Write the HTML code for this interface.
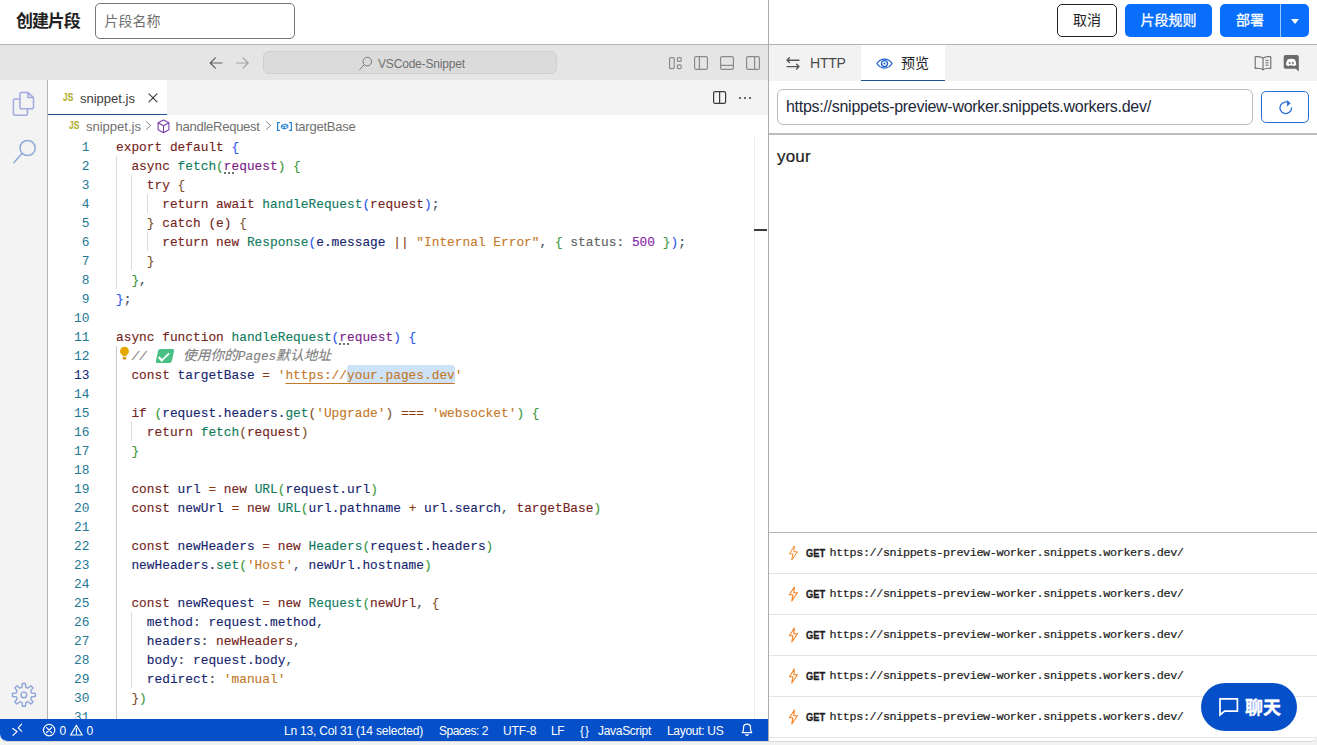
<!DOCTYPE html>
<html lang="zh-CN">
<head>
<meta charset="utf-8">
<title>创建片段</title>
<style>
*{box-sizing:border-box;margin:0;padding:0}
html,body{width:1317px;height:745px;overflow:hidden;background:#f2f2f2}
body{font-family:"Liberation Sans","Noto Sans CJK SC",sans-serif;color:#1d1d1d;position:relative}
.abs{position:absolute}
#app{position:absolute;left:0;top:0;width:1317px;height:742px;background:#fff;border-radius:0 0 7px 7px;overflow:hidden;border-bottom:1px solid #d9d9d9}
/* top bar */
#top{position:absolute;left:0;top:0;width:1317px;height:44px;background:#fff}
#topline{position:absolute;left:0;top:44px;width:1317px;height:1px;background:#b3b3b3}
#title{position:absolute;left:16px;top:10px;font-size:17px;font-weight:bold;line-height:24px;color:#222;letter-spacing:-1.1px}
#nameinput{position:absolute;left:95px;top:3px;width:200px;height:36px;border:1px solid #767676;border-radius:5px;background:#fff;font-size:14px;line-height:34px;padding-left:8.5px;color:#6f6f6f}
.btn{position:absolute;top:4px;height:33px;border-radius:5px;font-size:14px;line-height:31px;text-align:center}
#cancel{left:1057px;width:60px;border:1px solid #222;color:#222;background:#fff}
#rules{left:1125px;width:87px;background:#0a6efd;color:#fff;line-height:33px;-webkit-text-stroke:0.3px #fff}
#deploy{left:1220px;width:60px;background:#0a6efd;color:#fff;border-radius:5px 0 0 5px;line-height:33px;-webkit-text-stroke:0.3px #fff}
#deploydd{left:1281px;width:28px;background:#0a6efd;border-radius:0 5px 5px 0}
#deploysep{position:absolute;left:1280px;top:4px;width:1px;height:33px;background:#9cc4fe}
#deploydd:after{content:"";position:absolute;left:9.5px;top:14.5px;border:4.7px solid transparent;border-top:5.5px solid #fff;border-bottom:0}
/* left pane */
#titlebar{position:absolute;left:0;top:45px;width:768px;height:35px;background:#e5e5e5}
#cmd{position:absolute;left:263px;top:6px;width:294px;height:23px;border:1px solid #cfcfcf;border-radius:6px;background:#dbdbdb}
#cmdtxt{position:absolute;left:378px;top:11px;font-size:12px;line-height:16px;color:#707070;letter-spacing:-0.18px}
#actbar{position:absolute;left:0;top:80px;width:48px;height:639px;background:#f3f3f3;border-right:1px solid #b4b4b4}
#tabs{position:absolute;left:48px;top:80px;width:720px;height:35px;background:#f3f3f3}
#tab{position:absolute;left:0;top:0;width:119px;height:35px;background:#fff;border-bottom:1px solid #1f5394}
#crumbs{position:absolute;left:48px;top:115px;width:720px;height:22px;background:#fff;font-size:13px;line-height:24px;color:#707070}
#editor{position:absolute;left:48px;top:137px;width:720px;height:582px;background:#fff;overflow:hidden}
#vdiv{position:absolute;left:768px;top:0;width:1px;height:741px;background:#ababab}
#status{position:absolute;left:0;top:719px;width:768px;height:22px;background:#0550c8;color:#fff;font-size:12px;line-height:25px;border-radius:0 0 0 7px}
/* right pane */
#rtabs{position:absolute;left:769px;top:45px;width:548px;height:36px;background:#f2f2f2}
#ptab{position:absolute;left:92px;top:0;width:84px;height:36px;background:#fff;border-bottom:1px solid #1f5394}
#url{position:absolute;left:777px;top:89px;width:476px;height:36px;border:1px solid #bcbcbc;border-radius:6px;font-size:16px;line-height:34px;padding-left:8px;color:#1d2939;white-space:nowrap;overflow:hidden;letter-spacing:-0.28px}
#refresh{position:absolute;left:1261px;top:91px;width:48px;height:32px;border:1px solid #2b6fd6;border-radius:5px;background:#fff}
#hline{position:absolute;left:769px;top:133px;width:548px;height:2px;background:#bcbcbc}
#your{position:absolute;left:777px;top:146.5px;font-size:17px;line-height:20px;color:#1d1d1d;-webkit-text-stroke:0.2px #1d1d1d;letter-spacing:0.2px}
#log{position:absolute;left:769px;top:532px;width:548px;height:209px;border-top:1px solid #b3b3b3;background:#fff}
.row{position:relative;height:41px;border-bottom:1px solid #e5e5e5;font-family:"Liberation Mono",monospace;font-size:11.8px;letter-spacing:-0.4px;line-height:40px;color:#1d1d1d;white-space:pre}
.row b{position:absolute;left:36.5px;top:0;font-family:"Liberation Sans",sans-serif;font-size:10.8px;font-weight:bold;letter-spacing:0;transform:scaleX(.86);transform-origin:0 50%;-webkit-text-stroke:0.3px currentColor}
.row span{position:absolute;left:60.5px;top:0;-webkit-text-stroke:0.2px currentColor}
.row svg{position:absolute;left:19px;top:12px}
#chat{position:absolute;left:1201px;top:683px;width:96px;height:48px;border-radius:24px;background:#0550c8;color:#fff;font-size:18px;font-weight:bold;line-height:48px}
#chat span{position:absolute;left:44px;top:0.5px;-webkit-text-stroke:0.4px #fff}
/* code */
.ln{position:absolute;left:0;width:41.5px;text-align:right;color:#237893;font-family:"Liberation Mono",monospace;font-size:12.83px;line-height:19px;height:19px}
.cl{position:absolute;left:68px;height:19px;white-space:pre;font-family:"Liberation Mono","Noto Sans CJK SC",monospace;font-size:12.83px;line-height:19px;color:#3b4a5a}
.k{color:#74231a}.f{color:#0e7a5c}.p{color:#7a1a8a}.v{color:#14246e}.m{color:#74231a}.s{color:#c4782a}.n{color:#8a1fa8}.g{color:#606060}
.o{color:#8a3c14}.c{color:#808080;font-style:italic}.b1{color:#2a55f0}.b2{color:#3c983c}.b3{color:#80502c}
.ig{position:absolute;width:1px;background:#dcdcdc}
.st{position:absolute;top:0;white-space:nowrap}

.ln.cur{color:#0b216f}
.ig.act{background:#c8c8c8}
.emo{display:inline-block;position:relative;margin:0 2.3px 0 2.5px;width:16px;height:13.5px;color:transparent;background:#48c085;border-radius:2px;transform:skewX(-12deg);vertical-align:-2px;overflow:hidden;font-style:normal;line-height:13px}
.emo:after{content:"";position:absolute;left:4px;top:1.5px;width:4px;height:7.5px;border:solid #fff;border-width:0 2px 2px 0;transform:rotate(40deg)}
.u{text-decoration:underline;text-underline-offset:4px;text-decoration-thickness:1px}
.sel{background:#cfe3f8;border-radius:3px;padding:3.2px 0 0.3px 0}
#ruler{position:absolute;left:706px;top:0;width:13px;height:582px;border-left:1px solid #ececec;background:#fff}
#rulermark{position:absolute;left:706px;top:92px;width:13px;height:2px;background:#3b3b3b}

.js{font-size:10.2px;font-weight:bold;color:#b5b336;line-height:12px;transform:scaleX(.82);transform-origin:0 50%;display:inline-block;-webkit-text-stroke:0.2px #b5b336}

.cl,.ln{margin-top:1px}
.cl{-webkit-text-stroke:0.12px currentColor}
.cj{font-size:13.7px}
.hint{position:relative;display:inline-block;height:19px;vertical-align:top}
.hint:after{content:"";position:absolute;left:0;top:15px;width:2px;height:2px;background:#707070;box-shadow:4px 0 #707070,8px 0 #707070}
</style>
</head>
<body>
<div id="app">
<!-- TOP BAR -->
<div id="top">
  <div id="title">创建片段</div>
  <div id="nameinput">片段名称</div>
  <div class="btn" id="cancel">取消</div>
  <div class="btn" id="rules">片段规则</div>
  <div class="btn" id="deploy">部署</div>
  <div id="deploysep"></div>
  <div class="btn" id="deploydd"></div>
</div>
<div id="topline"></div>

<!-- LEFT: VS CODE -->
<div id="titlebar">
  <div id="cmd"></div>
<svg class="abs" style="left:0;top:0" width="768" height="35" viewBox="0 45 768 35" fill="none" stroke-linecap="round" stroke-linejoin="round">
<g stroke="#5f5f5f" stroke-width="1.2"><path d="M222 63H210.4M215.4 57.8L210.2 63l5.2 5.2"/></g>
<g stroke="#a3a3a3" stroke-width="1.2"><path d="M236.4 63H248M243 57.8l5.2 5.2-5.2 5.2"/></g>
<g stroke="#7a7a7a" stroke-width="1"><circle cx="367.3" cy="61.6" r="4.3"/><path d="M364.2 64.8L359.8 69.4"/></g>
<g stroke="#8a8a8a" stroke-width="1.2">
<rect x="669.6" y="57.6" width="4.6" height="11" rx="1"/><rect x="677.4" y="57.6" width="3.8" height="3.8" rx="1"/><rect x="677.4" y="64.8" width="3.8" height="3.8" rx="1"/>
<rect x="694.6" y="56.6" width="12.8" height="12.8" rx="1.5"/><path d="M699.4 56.6v12.8"/>
<rect x="720.6" y="56.6" width="12.8" height="12.8" rx="1.5"/><path d="M720.6 65.4h12.8"/>
<rect x="746.6" y="56.6" width="12.8" height="12.8" rx="1.5"/><path d="M754.6 56.6v12.8"/>
</g></svg>
  <div id="cmdtxt">VSCode-Snippet</div>
</div>
<div id="actbar"><svg class="abs" style="left:0;top:0" width="47" height="639" viewBox="0 80 47 639" fill="none" stroke-linecap="round" stroke-linejoin="round">
<g stroke="#a0a9e0" stroke-width="1.5">
<path d="M27.9 92.4H21.4a1.5 1.5 0 0 0-1.5 1.5v13.4a1.5 1.5 0 0 0 1.5 1.5h10.6a1.5 1.5 0 0 0 1.5-1.5V97.6zM27.9 92.4v5.2h5.6"/>
<path d="M19.9 98.9h-5a1.5 1.5 0 0 0-1.5 1.5v13.3a1.5 1.5 0 0 0 1.5 1.5h11.1a1.5 1.5 0 0 0 1.5-1.5v-4.9"/>
</g>
<g stroke="#8eaad8" stroke-width="1.5"><circle cx="27.6" cy="148" r="7.6"/><path d="M22 153.6L13.8 162.8"/></g>
<g stroke="#8ea6d8" stroke-width="1.4"><path d="M22.00 687.23 L22.37 683.50 L25.43 683.50 L25.80 687.23 L27.97 688.13 L30.88 685.76 L33.04 687.92 L30.67 690.83 L31.57 693.00 L35.30 693.37 L35.30 696.43 L31.57 696.80 L30.67 698.97 L33.04 701.88 L30.88 704.04 L27.97 701.67 L25.80 702.57 L25.43 706.30 L22.37 706.30 L22.00 702.57 L19.83 701.67 L16.92 704.04 L14.76 701.88 L17.13 698.97 L16.23 696.80 L12.50 696.43 L12.50 693.37 L16.23 693.00 L17.13 690.83 L14.76 687.92 L16.92 685.76 L19.83 688.13Z"/><circle cx="23.9" cy="694.9" r="2.8"/></g>
</svg></div>
<div id="tabs"><div id="tab">
<span class="st js" style="left:15px;top:11.7px">JS</span>
<span class="st" style="left:32px;top:10px;font-size:13px;line-height:18px;color:#3b3b3b">snippet.js</span>
<svg class="abs" style="left:99px;top:11.9px" width="12" height="12" viewBox="0 0 12 12" stroke="#3b3b3b" stroke-width="1.1" stroke-linecap="round"><path d="M2 1.9l8 8M10 1.9l-8 8"/></svg>
</div>
<svg class="abs" style="left:660px;top:8px" width="50" height="20" viewBox="708 88 50 20" fill="none" stroke="#3b3b3b" stroke-width="1.2" stroke-linejoin="round"><rect x="713.6" y="91.6" width="12" height="11.8" rx="1.5"/><path d="M719.6 91.6v11.8"/><g fill="#3b3b3b" stroke="none"><circle cx="740" cy="98" r="1"/><circle cx="745" cy="98" r="1"/><circle cx="750" cy="98" r="1"/></g></svg>
</div>
<div id="crumbs">
<span class="st js" style="left:21.2px;top:5.2px">JS</span>
<span class="st" style="left:38px">snippet.js</span>
<svg class="abs" style="left:97px;top:4.8px" width="8" height="11" viewBox="0 0 8 11" fill="none" stroke="#8c8c8c" stroke-width="1" stroke-linecap="round" stroke-linejoin="round"><path d="M1.3 1.6L5.8 5.5 1.3 9.4"/></svg>
<svg class="abs" style="left:109.4px;top:4.1px" width="13" height="15" viewBox="0 0 13 15" fill="none" stroke="#7a3fa8" stroke-width="1.1" stroke-linejoin="round"><path d="M6.5 1l5.4 2.8v7l-5.4 3-5.4-3v-7zM1.1 3.800l5.400 3 5.400-3M6.500 6.800v7"/></svg>
<span class="st" style="left:127.5px;letter-spacing:-0.25px">handleRequest</span>
<svg class="abs" style="left:217px;top:4.8px" width="8" height="11" viewBox="0 0 8 11" fill="none" stroke="#8c8c8c" stroke-width="1" stroke-linecap="round" stroke-linejoin="round"><path d="M1.3 1.6L5.8 5.5 1.3 9.4"/></svg>
<svg class="abs" style="left:228.5px;top:7px" width="15" height="9" viewBox="0 0 15 9" fill="none" stroke="#1a7acc" stroke-width="1.1" stroke-linejoin="round"><path d="M2.8 .6H.6v7.8h2.200M12.200 .600h2.200v7.800h-2.200"/><path d="M4.400 3.600l3.600-1.600 2.800 1.200v2.400L7.200 7 4.400 5.800zM4.400 3.600l2.800 1.200 3.600-1.600M7.200 4.800V7" stroke-width="1"/></svg>
<span class="st" style="left:247px;letter-spacing:-0.24px">targetBase</span>
</div>
<div id="editor">
<div class="ig" style="left:68.0px;top:19px;height:133px"></div>
<div class="ig" style="left:83.4px;top:38px;height:95px"></div>
<div class="ig" style="left:98.8px;top:57px;height:19px"></div>
<div class="ig" style="left:98.8px;top:95px;height:19px"></div>
<div class="ig act" style="left:68.0px;top:209px;height:380px"></div>
<div class="ig" style="left:83.4px;top:285px;height:19px"></div>
<div class="ig" style="left:83.4px;top:475px;height:76px"></div>
<div class="ln" style="top:0px">1</div>
<div class="cl" style="top:0px"><span class="k">export</span> <span class="k">default</span> <span class="b1">{</span></div>
<div class="ln" style="top:19px">2</div>
<div class="cl" style="top:19px">  <span class="k">async</span> <span class="f">fetch</span><span class="b2">(</span><span class="p hint">request</span><span class="b2">)</span> <span class="b2">{</span></div>
<div class="ln" style="top:38px">3</div>
<div class="cl" style="top:38px">    <span class="k">try</span> <span class="b3">{</span></div>
<div class="ln" style="top:57px">4</div>
<div class="cl" style="top:57px">      <span class="k">return</span> <span class="k">await</span> <span class="f">handleRequest</span><span class="b1">(</span><span class="m">request</span><span class="b1">)</span>;</div>
<div class="ln" style="top:76px">5</div>
<div class="cl" style="top:76px">    <span class="b3">}</span> <span class="k">catch</span> <span class="m">(e)</span> <span class="b3">{</span></div>
<div class="ln" style="top:95px">6</div>
<div class="cl" style="top:95px">      <span class="k">return</span> <span class="k">new</span> <span class="f">Response</span><span class="b1">(</span><span class="v">e.message</span> <span class="o">||</span> <span class="s">"Internal Error"</span>, <span class="b2">{</span> <span class="g">status:</span> <span class="n">500</span> <span class="b2">}</span><span class="b1">)</span>;</div>
<div class="ln" style="top:114px">7</div>
<div class="cl" style="top:114px">    <span class="b3">}</span></div>
<div class="ln" style="top:133px">8</div>
<div class="cl" style="top:133px">  <span class="b2">}</span>,</div>
<div class="ln" style="top:152px">9</div>
<div class="cl" style="top:152px"><span class="b1">}</span>;</div>
<div class="ln" style="top:171px">10</div>
<div class="ln" style="top:190px">11</div>
<div class="cl" style="top:190px"><span class="k">async</span> <span class="k">function</span> <span class="f">handleRequest</span><span class="b1">(</span><span class="p hint">request</span><span class="b1">)</span> <span class="b1">{</span></div>
<div class="ln" style="top:209px">12</div>
<div class="cl" style="top:209px">  <span class="c">// <span class="emo">✅</span> <span class="cj">使用你的</span>Pages<span class="cj">默认地址</span></span></div>
<div class="ln cur" style="top:228px">13</div>
<div class="cl" style="top:228px">  <span class="k">const</span> <span class="v">targetBase</span> <span class="o">=</span> <span class="s">'</span><span class="s u">https://<span class="sel">your.pages.dev</span></span><span class="s">'</span></div>
<div class="ln" style="top:247px">14</div>
<div class="ln" style="top:266px">15</div>
<div class="cl" style="top:266px">  <span class="k">if</span> <span class="b2">(</span><span class="v">request.headers.</span><span class="f">get</span><span class="b3">(</span><span class="s">'Upgrade'</span><span class="b3">)</span> <span class="o">===</span> <span class="s">'websocket'</span><span class="b2">)</span> <span class="b2">{</span></div>
<div class="ln" style="top:285px">16</div>
<div class="cl" style="top:285px">    <span class="k">return</span> <span class="f">fetch</span><span class="b3">(</span><span class="m">request</span><span class="b3">)</span></div>
<div class="ln" style="top:304px">17</div>
<div class="cl" style="top:304px">  <span class="b2">}</span></div>
<div class="ln" style="top:323px">18</div>
<div class="ln" style="top:342px">19</div>
<div class="cl" style="top:342px">  <span class="k">const</span> <span class="v">url</span> <span class="o">=</span> <span class="k">new</span> <span class="f">URL</span><span class="b2">(</span><span class="v">request.url</span><span class="b2">)</span></div>
<div class="ln" style="top:361px">20</div>
<div class="cl" style="top:361px">  <span class="k">const</span> <span class="v">newUrl</span> <span class="o">=</span> <span class="k">new</span> <span class="f">URL</span><span class="b2">(</span><span class="v">url.pathname</span> <span class="o">+</span> <span class="v">url.search</span>, <span class="m">targetBase</span><span class="b2">)</span></div>
<div class="ln" style="top:380px">21</div>
<div class="ln" style="top:399px">22</div>
<div class="cl" style="top:399px">  <span class="k">const</span> <span class="v">newHeaders</span> <span class="o">=</span> <span class="k">new</span> <span class="f">Headers</span><span class="b2">(</span><span class="v">request.headers</span><span class="b2">)</span></div>
<div class="ln" style="top:418px">23</div>
<div class="cl" style="top:418px">  <span class="v">newHeaders.</span><span class="f">set</span><span class="b2">(</span><span class="s">'Host'</span>, <span class="v">newUrl.hostname</span><span class="b2">)</span></div>
<div class="ln" style="top:437px">24</div>
<div class="ln" style="top:456px">25</div>
<div class="cl" style="top:456px">  <span class="k">const</span> <span class="v">newRequest</span> <span class="o">=</span> <span class="k">new</span> <span class="f">Request</span><span class="b2">(</span><span class="m">newUrl</span>, <span class="b3">{</span></div>
<div class="ln" style="top:475px">26</div>
<div class="cl" style="top:475px">    <span class="v">method</span>: <span class="v">request.method</span>,</div>
<div class="ln" style="top:494px">27</div>
<div class="cl" style="top:494px">    <span class="v">headers</span>: <span class="m">newHeaders</span>,</div>
<div class="ln" style="top:513px">28</div>
<div class="cl" style="top:513px">    <span class="v">body</span>: <span class="v">request.body</span>,</div>
<div class="ln" style="top:532px">29</div>
<div class="cl" style="top:532px">    <span class="v">redirect</span>: <span class="s">'manual'</span></div>
<div class="ln" style="top:551px">30</div>
<div class="cl" style="top:551px">  <span class="b3">}</span><span class="b2">)</span></div>
<div class="ln" style="top:570px">31</div>
<svg class="abs" style="left:71px;top:209px" width="11" height="15" viewBox="0 0 11 15"><path d="M5.500 .800a4.400 4.400 0 0 0-2.800 7.800c.500.500.800 1 .800 1.700h4c0-.700.300-1.200.800-1.700A4.400 4.400 0 0 0 5.500.800z" fill="#e5a800"/><path d="M3.700 11.300h3.600v1.300a.900.900 0 0 1-.900.900H4.600a.900.900 0 0 1-.900-.900z" fill="#c98f00"/></svg>
<div id="ruler"></div><div id="rulermark"></div>
</div>
<div id="status">
<svg class="abs" style="left:0;top:0" width="100" height="22" viewBox="0 719 100 22" fill="none" stroke="#fff" stroke-width="1.2" stroke-linecap="round" stroke-linejoin="round">
<path d="M12.8 728.4l4.2 3.2-4 3.8M21.6 724.2l-3.4 3.6 3.4 3.4"/>
<circle cx="49.1" cy="730.1" r="5.7"/><path d="M46.6 727.6l5 5M51.6 727.6l-5 5" stroke-width="1.3"/>
<path d="M76.4 725.2l5.8 9.8H70.6zM76.4 728.6v3.2M76.4 733.2v.2"/>
</svg>
<span class="st" style="left:59.5px">0</span><span class="st" style="left:86.5px">0</span>
<span class="st" style="left:284px;letter-spacing:-0.19px">Ln 13, Col 31 (14 selected)</span>
<span class="st" style="left:439px;letter-spacing:-0.5px">Spaces: 2</span>
<span class="st" style="left:503px;letter-spacing:-0.15px">UTF-8</span>
<span class="st" style="left:551px;letter-spacing:-0.5px">LF</span>
<span class="st" style="left:580px;letter-spacing:1px">{}</span>
<span class="st" style="left:598px;letter-spacing:-0.3px">JavaScript</span>
<span class="st" style="left:667px;letter-spacing:-0.3px">Layout: US</span>
<svg class="abs" style="left:738.5px;top:2.2px" width="16" height="16" viewBox="0 0 16 16" fill="none" stroke="#fff" stroke-width="1.2" stroke-linecap="round" stroke-linejoin="round"><path d="M3.2 11.6h9.6c-.9-1-1.3-2-1.3-3.6V6.6a3.5 3.5 0 0 0-7 0V8c0 1.600-.4 2.600-1.300 3.600zM6.800 13.600a1.300 1.300 0 0 0 2.400 0"/></svg>
</div>
<div id="vdiv"></div>

<!-- RIGHT: PREVIEW -->
<div id="rtabs">
<svg class="abs" style="left:16px;top:11px" width="16" height="14" viewBox="785 56 16 14" fill="none" stroke="#555" stroke-width="1.35" stroke-linecap="round" stroke-linejoin="round"><path d="M799 60.2H787M789.4 57.8l-2.4 2.4 2.4 2.4M787 66.6h12M796.6 64.2l2.4 2.4-2.4 2.4"/></svg>
<span class="st" style="left:41px;top:9px;font-size:14px;line-height:18px;color:#4a4a4a;letter-spacing:-0.2px">HTTP</span>
<div id="ptab">
<svg class="abs" style="left:15.4px;top:13px" width="17" height="11" viewBox="0 0 17 11" fill="none" stroke="#1f5fd0" stroke-width="1.25"><path d="M.9 5.5c1.7-2.8 4.4-4.5 7.6-4.5s5.9 1.7 7.6 4.5c-1.7 2.8-4.4 4.5-7.6 4.5S2.6 8.3.900 5.5z"/><circle cx="8.5" cy="5.5" r="3"/><circle cx="8.5" cy="5.5" r="1" fill="#1f5fd0" stroke="none"/></svg>
<span class="st" style="left:40px;top:8px;font-size:14px;line-height:20px;color:#222">预览</span>
</div>
<svg class="abs" style="left:484px;top:9px" width="50" height="20" viewBox="1253 54 50 20" fill="none" stroke="#6b6b6b" stroke-width="1.1" stroke-linejoin="round">
<path d="M1263 58.200c-1.800-1.400-4.600-1.800-7.800-1.400v11.600c3.200-.4 6-.200 7.800 1.400 1.800-1.600 4.600-1.800 7.800-1.400V56.800c-3.200-.4-6 0-7.800 1.400zM1263 58.200v11.600"/>
<path d="M1265.400 60.400h3.200M1265.400 62.800h3.200M1265.400 65.200h3.200" stroke-width="1"/>
<g stroke="none"><path fill="#6b6b6b" d="M1285.500 55h11.500a1.800 1.800 0 0 1 1.800 1.800V71.600l-3-2.800H1285.500a1.800 1.800 0 0 1-1.800-1.800V56.800a1.800 1.800 0 0 1 1.800-1.800z"/>
<path fill="#fff" d="M1287.600 59.600c1.200-.6 2.200-.8 3.600-.8s2.400.2 3.600.8c1 1.600 1.500 3.400 1.400 5.400-.8.600-1.600 1-2.600 1.200l-.6-1c-.6.200-1.200.3-1.800.3s-1.200-.1-1.800-.3l-.6 1c-1-.2-1.800-.6-2.600-1.200-.1-2 .4-3.800 1.400-5.400z"/>
<circle cx="1289.600" cy="63" r="1" fill="#6b6b6b"/><circle cx="1292.800" cy="63" r="1" fill="#6b6b6b"/></g>
</svg>
</div>
<div id="url">https://snippets-preview-worker.snippets.workers.dev/</div>
<div id="refresh"><svg class="abs" style="left:15px;top:7px" width="18" height="18" viewBox="0 0 18 18" fill="none" stroke="#2b6fd6" stroke-width="1.3" stroke-linecap="round" stroke-linejoin="round"><path d="M14.600 8.800a5.800 5.800 0 1 1-2-4.400"/><path d="M10.200 1.600l2.800 2.800-3 2.600" fill="#2b6fd6" stroke-width="1"/></svg></div>
<div id="hline"></div>
<div id="your">your</div>
<div id="log">
<div class="row"><svg width="11" height="16" viewBox="0 0 11 16" fill="none" stroke="#f48a2a" stroke-width="1" stroke-linejoin="round"><path d="M6.400 1L1.400 8.800h3.400L3.800 15l5.600-8.200H5.800z"/></svg><b>GET</b><span>https://snippets-preview-worker.snippets.workers.dev/</span></div>
<div class="row"><svg width="11" height="16" viewBox="0 0 11 16" fill="none" stroke="#f38020" stroke-width="1.1" stroke-linejoin="round"><path d="M6.400 1L1.400 8.800h3.400L3.800 15l5.600-8.200H5.800z"/></svg><b>GET</b><span>https://snippets-preview-worker.snippets.workers.dev/</span></div>
<div class="row"><svg width="11" height="16" viewBox="0 0 11 16" fill="none" stroke="#f38020" stroke-width="1.1" stroke-linejoin="round"><path d="M6.400 1L1.400 8.800h3.400L3.800 15l5.600-8.200H5.800z"/></svg><b>GET</b><span>https://snippets-preview-worker.snippets.workers.dev/</span></div>
<div class="row"><svg width="11" height="16" viewBox="0 0 11 16" fill="none" stroke="#f38020" stroke-width="1.1" stroke-linejoin="round"><path d="M6.400 1L1.400 8.800h3.400L3.800 15l5.600-8.200H5.800z"/></svg><b>GET</b><span>https://snippets-preview-worker.snippets.workers.dev/</span></div>
<div class="row"><svg width="11" height="16" viewBox="0 0 11 16" fill="none" stroke="#f38020" stroke-width="1.1" stroke-linejoin="round"><path d="M6.400 1L1.400 8.800h3.400L3.800 15l5.600-8.200H5.800z"/></svg><b>GET</b><span>https://snippets-preview-worker.snippets.workers.dev/</span></div>
<div class="row"><svg width="11" height="16" viewBox="0 0 11 16" fill="none" stroke="#f38020" stroke-width="1.1" stroke-linejoin="round"><path d="M6.400 1L1.400 8.800h3.400L3.800 15l5.600-8.200H5.800z"/></svg><b>GET</b><span>https://snippets-preview-worker.snippets.workers.dev/</span></div>
</div>
<div id="chat"><svg class="abs" style="left:17px;top:14px" width="22" height="20" viewBox="0 0 22 20" fill="none" stroke="#fff" stroke-width="1.700" stroke-linejoin="miter"><path d="M2 1.800h17.400v12.400H6.600L2 18z"/></svg><span>聊天</span></div>
</div>
</body>
</html>
